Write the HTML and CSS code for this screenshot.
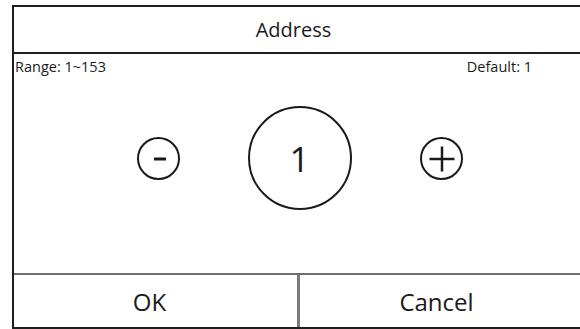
FILE: index.html
```html
<!DOCTYPE html>
<html>
<head>
  <title>Address</title>
  <link rel="stylesheet" href="styles.css">
</head>
<body>
  <div class="panel">
    <div class="title">Address</div>
    <div class="content">
      <div class="info">
        <span>Range: 1~153</span>
        <span>Default: 1</span>
      </div>
      <div class="stepper">
        <button class="round small">
          <svg width="39" height="39" viewBox="0 0 39 39">
            <line x1="15" y1="20" x2="27" y2="20" stroke="#1a1a1a" stroke-width="3"/>
          </svg>
        </button>
        <div class="round value">1</div>
        <button class="round small">
          <svg width="39" height="39" viewBox="0 0 39 39">
            <line x1="7.5" y1="20" x2="32.5" y2="20" stroke="#1a1a1a" stroke-width="2.5"/>
            <line x1="20" y1="7.5" x2="20" y2="32.5" stroke="#1a1a1a" stroke-width="2.5"/>
          </svg>
        </button>
      </div>
    </div>
    <div class="actions">
      <button class="action">OK</button>
      <button class="action cancel">Cancel</button>
    </div>
  </div>
</body>
</html>
```

FILE: styles.css
```css
body {
  margin: 0;
  background-color: #fff;
  overflow: hidden;
  font-family: "Open Sans", "Noto Sans", sans-serif;
  color: #1a1a1a;
}

.panel {
  box-sizing: border-box;
  width: 573px;
  height: 324px;
  margin: 5px 0 0 12px;
  border: 2px solid #1e1e1e;
  border-right: none;
  display: flex;
  flex-direction: column;
}

.title {
  height: 45px;
  border-bottom: 2px solid #1e1e1e;
  display: flex;
  align-items: center;
  justify-content: center;
  padding-right: 12px;
  font-size: 20px;
}

.content {
  flex: 1;
}

.info {
  display: flex;
  justify-content: space-between;
  padding: 4px 53px 0 1px;
  font-size: 14.5px;
  line-height: 18px;
}

.stepper {
  display: flex;
  justify-content: center;
  align-items: center;
  gap: 68px;
  margin-top: 30px;
}

.round {
  box-sizing: border-box;
  border: 2px solid #1a1a1a;
  border-radius: 50%;
  background: #fff;
  padding: 0;
  display: flex;
  align-items: center;
  justify-content: center;
}

.small {
  width: 43px;
  height: 43px;
}

.value {
  width: 104px;
  height: 104px;
  font-size: 35px;
}

.actions {
  height: 52px;
  border-top: 2px solid #6e6e6e;
  display: grid;
  grid-template-columns: 283px 1fr;
}

.action {
  border: none;
  background: #fff;
  font-family: inherit;
  font-size: 24px;
  color: #1a1a1a;
  padding: 0 12px 0 0;
}

.cancel {
  border-left: 3px solid #7a7a7a;
}
```
